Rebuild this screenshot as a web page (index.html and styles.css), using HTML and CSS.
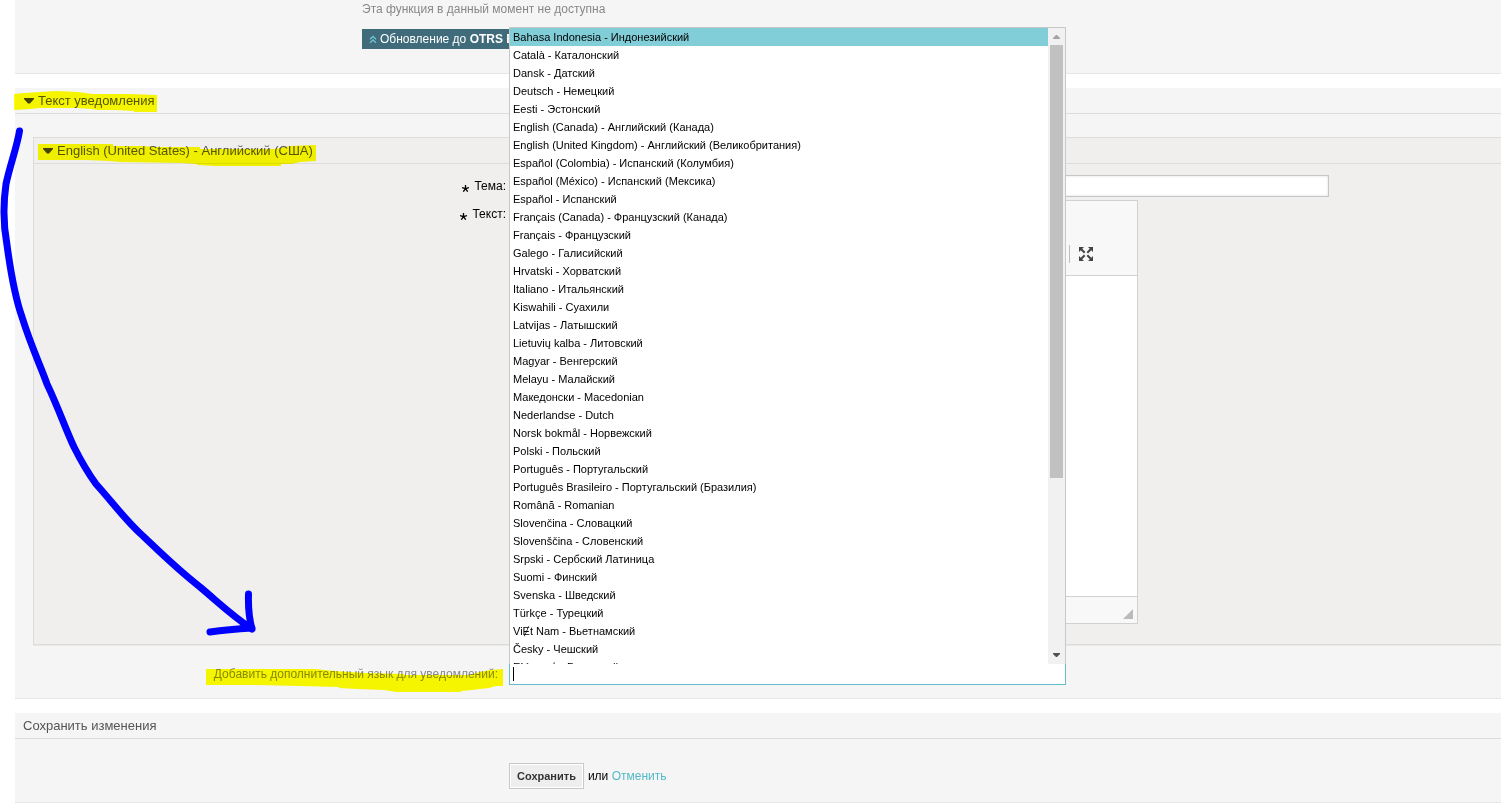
FILE: index.html
```html
<!DOCTYPE html>
<html lang="ru">
<head>
<meta charset="utf-8">
<title>Уведомления</title>
<link rel="stylesheet" href="styles.css">
</head>
<body>
<main class="page">
  <section class="widget widget-top">
    <p class="hint">Эта функция в данный момент не доступна</p>
    <a class="upgrade" href="#">
      <svg class="upgrade-icon" viewBox="0 0 8 9" aria-hidden="true"><path d="M1 4.200 4 1.400 7 4.200M1 7.800 4 5 7 7.800"/></svg>
      <span>Обновление до <b>OTRS B</b></span>
    </a>
  </section>

  <section class="widget">
    <h2 class="widget-title"><svg class="caret" viewBox="0 0 10 6" aria-hidden="true"><path d="M0 0h10v1L6 5.400H4L0 1z"/></svg>Текст уведомления</h2>
    <div class="widget-body">
      <div class="language">
        <h3 class="language-title"><svg class="caret" viewBox="0 0 10 6" aria-hidden="true"><path d="M0 0h10v1L6 5.400H4L0 1z"/></svg>English (United States) - Английский (США)</h3>
        <div class="fields">
          <label class="label" for="subject"><svg class="star" viewBox="0 0 7 7" aria-hidden="true"><path d="M3.500 3.700V0M3.500 3.700 0 2.600M3.500 3.700 7 2.600M3.500 3.700 1.300 6.700M3.500 3.700 5.700 6.700"/></svg>Тема:</label>
          <input class="subject" id="subject" type="text">
          <label class="label" for="body"><svg class="star" viewBox="0 0 7 7" aria-hidden="true"><path d="M3.500 3.700V0M3.500 3.700 0 2.600M3.500 3.700 7 2.600M3.500 3.700 1.300 6.700M3.500 3.700 5.700 6.700"/></svg>Текст:</label>
          <div class="editor">
            <div class="toolbar">
              <button class="maximize" type="button" aria-label="Развернуть">
                <svg viewBox="0 0 14 14" aria-hidden="true"><path class="heads" d="M0 0h5L0 5zM14 0v5L9 0zM0 14V9l5 5zM14 14H9l5-5z"/><path class="shafts" d="M2 2l3.700 3.700M12 2 8.300 5.700M2 12l3.700-3.700M12 12 8.300 8.300"/></svg>
              </button>
            </div>
            <textarea class="editor-text" id="body"></textarea>
            <div class="editor-foot"><svg viewBox="0 0 10 10" aria-hidden="true"><path d="M10 0v10H0z"/></svg></div>
          </div>
        </div>
      </div>
      <div class="add-row">
        <label class="add-label" for="language">Добавить дополнительный язык для уведомлений:</label>
        <div class="picker">
          <input class="picker-input" id="language" type="text" role="combobox" aria-expanded="true" aria-controls="languages">
          <span class="text-cursor"></span>
          <div class="popup">
            <ul class="options" id="languages" role="listbox">
              <li class="option selected" role="option" aria-selected="true">Bahasa Indonesia - Индонезийский</li>
              <li class="option" role="option">Català - Каталонский</li>
              <li class="option" role="option">Dansk - Датский</li>
              <li class="option" role="option">Deutsch - Немецкий</li>
              <li class="option" role="option">Eesti - Эстонский</li>
              <li class="option" role="option">English (Canada) - Английский (Канада)</li>
              <li class="option" role="option">English (United Kingdom) - Английский (Великобритания)</li>
              <li class="option" role="option">Español (Colombia) - Испанский (Колумбия)</li>
              <li class="option" role="option">Español (México) - Испанский (Мексика)</li>
              <li class="option" role="option">Español - Испанский</li>
              <li class="option" role="option">Français (Canada) - Французский (Канада)</li>
              <li class="option" role="option">Français - Французский</li>
              <li class="option" role="option">Galego - Галисийский</li>
              <li class="option" role="option">Hrvatski - Хорватский</li>
              <li class="option" role="option">Italiano - Итальянский</li>
              <li class="option" role="option">Kiswahili - Суахили</li>
              <li class="option" role="option">Latvijas - Латышский</li>
              <li class="option" role="option">Lietuvių kalba - Литовский</li>
              <li class="option" role="option">Magyar - Венгерский</li>
              <li class="option" role="option">Melayu - Малайский</li>
              <li class="option" role="option">Македонски - Macedonian</li>
              <li class="option" role="option">Nederlandse - Dutch</li>
              <li class="option" role="option">Norsk bokmål - Норвежский</li>
              <li class="option" role="option">Polski - Польский</li>
              <li class="option" role="option">Português - Португальский</li>
              <li class="option" role="option">Português Brasileiro - Португальский (Бразилия)</li>
              <li class="option" role="option">Română - Romanian</li>
              <li class="option" role="option">Slovenčina - Словацкий</li>
              <li class="option" role="option">Slovenščina - Словенский</li>
              <li class="option" role="option">Srpski - Сербский Латиница</li>
              <li class="option" role="option">Suomi - Финский</li>
              <li class="option" role="option">Svenska - Шведский</li>
              <li class="option" role="option">Türkçe - Турецкий</li>
              <li class="option" role="option">ViɆt Nam - Вьетнамский</li>
              <li class="option" role="option">Česky - Чешский</li>
              <li class="option" role="option">Ελληνικά - Греческий</li>
            </ul>
            <div class="scrollbar" aria-hidden="true">
              <svg class="scroll-up" viewBox="0 0 7 4"><path d="M0 4V3L3 0h1l3 3v1z"/></svg>
              <div class="track"><div class="thumb"></div></div>
              <svg class="scroll-down" viewBox="0 0 7 4"><path d="M0 0h7v1L4 4H3L0 1z"/></svg>
            </div>
          </div>
        </div>
      </div>
    </div>
  </section>

  <section class="widget">
    <h2 class="widget-title">Сохранить изменения</h2>
    <div class="actions">
      <button class="save" type="submit">Сохранить</button>
      <span>или <a class="cancel" href="#">Отменить</a></span>
    </div>
  </section>

  <svg class="marker" width="504" height="700" viewBox="0 0 504 700" aria-hidden="true">
    <path d="M14 94 24 93 40 92 56 91 78 92 92 94 128 94 157 95V112H134V111L115 110 100 110 90 109 78 108 40 108 30 109 14 110z"/>
    <path d="M38 144H113V146H140L160 147 200 147V149H275L290 146 316 145V161L300 162 292 164 281 164V166H216L197 165V164L182 163 120 162 109 161 87 160H38z"/>
    <path d="M206 669H315L334 671 365 673 404 674V675H470L480 672 490 670 503 669V686H496L489 688 480 689 472 690 461 691V692H396L384 690 357 689 339 688V687L300 686V686L257 685H206z"/>
  </svg>
  <svg class="arrow" width="270" height="650" viewBox="0 0 270 650" aria-hidden="true">
    <path d="M19.500 131C17 147 10 165 6 184C3 205 4 229 7 245C12 282 16 300 22 317C31 346 41 367 47 384C58 407 66 430 74 447C80 459 88 473 96 484C114 504 126 521 143 536C163 555 177 569 200 587C218 602 231 615 252 629M248.500 594C248 610 249 618 252 629M210 632C224 630 235 629 252 628"/>
  </svg>
</main>
</body>
</html>
```
FILE: styles.css
```css
* {
  box-sizing: border-box;
}

body {
  margin: 0;
  background: #fff;
  color: #000;
  font: 12px/16px "Liberation Sans", Arial, sans-serif;
}

.page {
  position: relative;
  display: flex;
  flex-direction: column;
  gap: 14px;
  padding-left: 15px;
  overflow: hidden;
}

.widget {
  background: #f5f5f5;
  border-bottom: 1px solid #e6e6e6;
}

.widget-top {
  padding: 0 0 24px 347px;
}

.hint {
  margin: 0 0 12px;
  padding-top: 1px;
  color: #888;
}

.upgrade {
  display: inline-flex;
  align-items: center;
  gap: 3px;
  height: 20px;
  padding: 0 7px;
  background: #3f6b7a;
  color: #fff;
  text-decoration: none;
  vertical-align: top;
}

.upgrade-icon {
  width: 8px;
  height: 9px;
  fill: none;
  stroke: #6fc5d2;
  stroke-width: 1.3;
}

.widget-title,
.language-title {
  display: flex;
  align-items: center;
  height: 26px;
  margin: 0;
  padding: 0 8px;
  border-bottom: 1px solid #dcdcdc;
  color: #555;
  font-size: 13px;
  font-weight: normal;
}

.caret {
  width: 10px;
  height: 6px;
  margin: 0 4px 0 1px;
  fill: #444;
}

.widget-body {
  padding: 23px 0 13px 18px;
}

.language {
  background: #f0efee;
  border: 1px solid #dcdcdc;
  border-right: 0;
  box-shadow: 0 1px 0 #e9e9e9;
}

.fields {
  display: grid;
  grid-template-columns: 472px 1fr;
  gap: 3px;
  align-items: start;
  padding: 11px 0 20px;
}

.label {
  padding-top: 3px;
  text-align: right;
}

.subject + .label {
  padding-top: 6px;
}

.star {
  width: 7px;
  height: 7px;
  margin-right: 5px;
  vertical-align: -2px;
  fill: none;
  stroke: #000;
  stroke-width: 1.3;
}

.subject {
  width: 100%;
  max-width: 820px;
  height: 22px;
  border: 1px solid #c6c6c6;
  background: #fff;
  box-shadow: inset 0 0 3px #ddd;
}

.editor {
  width: 100%;
  max-width: 629px;
  border: 1px solid #d1d1d1;
  background: #fff;
}

.toolbar {
  display: flex;
  justify-content: flex-end;
  align-items: flex-end;
  height: 75px;
  padding: 0 36px 12px 0;
  border-bottom: 1px solid #d1d1d1;
  background: #f8f8f8;
}

.maximize {
  display: flex;
  align-items: center;
  height: 18px;
  padding: 0 8px 0 9px;
  border: 0;
  border-left: 1px solid #bcbcbc;
  background: none;
}

.maximize svg {
  width: 14px;
  height: 14px;
}

.heads {
  fill: #444;
}

.shafts {
  fill: none;
  stroke: #444;
  stroke-width: 2;
}

.editor-text {
  display: block;
  width: 100%;
  height: 320px;
  border: 0;
  resize: none;
}

.editor-foot {
  display: flex;
  justify-content: flex-end;
  align-items: flex-end;
  height: 27px;
  padding: 4px;
  border-top: 1px solid #d1d1d1;
  background: #f8f8f8;
}

.editor-foot svg {
  width: 10px;
  height: 10px;
  fill: #bbb;
}

.add-row {
  display: grid;
  grid-template-columns: 465px minmax(0, 557px);
  gap: 11px;
  align-items: center;
  padding-top: 18px;
}

.add-label {
  color: #888;
  text-align: right;
}

.picker {
  position: relative;
}

.picker-input {
  display: block;
  width: 100%;
  height: 22px;
  border: 1px solid #65bccb;
  background: #fff;
}

.text-cursor {
  position: absolute;
  left: 4px;
  bottom: 4px;
  width: 1px;
  height: 14px;
  background: #000;
}

.popup {
  position: absolute;
  left: 0;
  right: 0;
  bottom: 21px;
  display: flex;
  height: 637px;
  border: 1px solid #c8c8c8;
  border-bottom: 0;
  background: #fff;
}

.options {
  flex: 1;
  margin: 0;
  padding: 0;
  overflow: hidden;
  list-style: none;
  font-size: 11px;
  line-height: 18px;
}

.option {
  height: 18px;
  padding-left: 3px;
  white-space: nowrap;
}

.selected {
  background: #81ced8;
}

.scrollbar {
  display: flex;
  flex-direction: column;
  align-items: center;
  gap: 6px;
  width: 17px;
  padding: 7px 0;
  background: #f1f1f1;
}

.scroll-up,
.scroll-down {
  width: 7px;
  height: 4px;
  fill: #a3a3a3;
}

.scroll-down {
  fill: #505050;
}

.track {
  flex: 1;
  width: 13px;
}

.thumb {
  height: 72%;
  background: #c1c1c1;
}

.actions {
  display: flex;
  align-items: center;
  gap: 4px;
  padding: 24px 0 13px 494px;
}

.save {
  height: 26px;
  padding: 0 7px;
  border: 1px solid #c8c8c8;
  background: #eee;
  box-shadow: inset 0 0 0 1px #fff;
  color: #333;
  font: bold 11px "Liberation Sans", Arial, sans-serif;
}

.cancel {
  color: #55b9c9;
  text-decoration: none;
}

.marker,
.arrow {
  position: absolute;
  top: 0;
  left: 0;
  pointer-events: none;
}

.marker {
  fill: #ff0;
  mix-blend-mode: multiply;
}

.arrow {
  fill: none;
  stroke: #00f;
  stroke-width: 7;
  stroke-linecap: round;
  stroke-linejoin: round;
}
```
